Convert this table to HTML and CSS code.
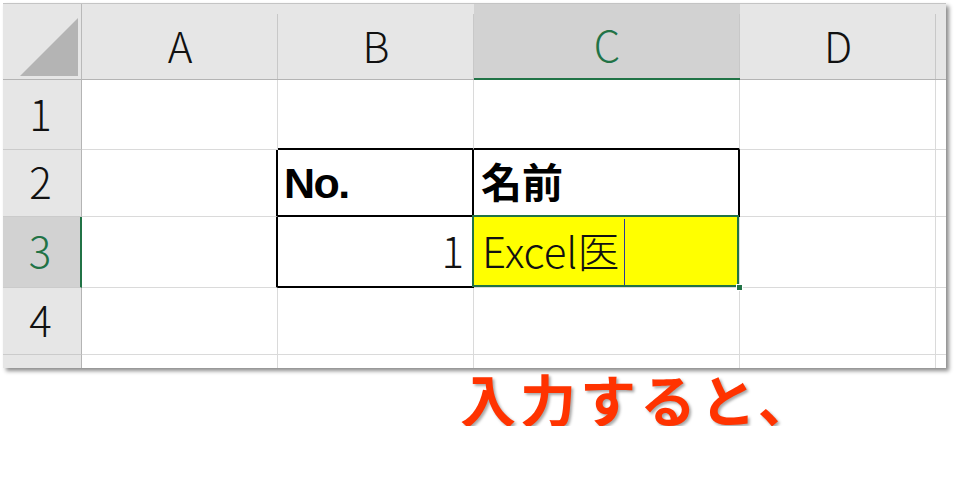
FILE: index.html
```html
<!DOCTYPE html>
<html lang="ja">
<head>
<meta charset="utf-8">
<title>Excel</title>
<link rel="stylesheet" href="styles.css">
</head>
<body>
<div class="sheet">
  <div class="c corner"><svg class="tri" width="78" height="75" viewBox="0 0 78 75"><polygon points="17,72 75,72 75,14" fill="#b4b4b4"/></svg></div>
  <div class="c h">A</div>
  <div class="c h">B</div>
  <div class="c h sel-h">C</div>
  <div class="c h">D</div>
  <div class="c h h-end"></div>

  <div class="c r">1</div>
  <div class="c"></div>
  <div class="c tb-top"></div>
  <div class="c tb-top"></div>
  <div class="c"></div>
  <div class="c end"></div>

  <div class="c r">2</div>
  <div class="c tb-left"></div>
  <div class="c tb-cell txt-bold">No.</div>
  <div class="c tb-cell txt-jp">名前</div>
  <div class="c"></div>
  <div class="c end"></div>

  <div class="c r sel-r">3</div>
  <div class="c tb-left"></div>
  <div class="c tb-cell txt num">1</div>
  <div class="c active txt">Excel医<span class="caret"></span></div>
  <div class="c"></div>
  <div class="c end"></div>

  <div class="c r">4</div>
  <div class="c"></div>
  <div class="c"></div>
  <div class="c"></div>
  <div class="c"></div>
  <div class="c end"></div>

  <div class="c r last"></div>
  <div class="c last"></div>
  <div class="c last"></div>
  <div class="c last"></div>
  <div class="c last"></div>
  <div class="c end last"></div>
</div>
<p class="note">入力すると、</p>
</body>
</html>
```
FILE: styles.css
```css
body {
  margin: 0;
  background: #fff;
  font-family: "Noto Sans CJK JP", sans-serif;
}

.sheet {
  margin: 3px 0 0 3px;
  width: 943px;
  border-top: 1px solid #c4c4c4;
  display: grid;
  grid-template-columns: 79px 196px 196px 266px 196px 10px;
  grid-template-rows: 76px 70px 67px 71px 67px 13px;
  box-shadow: 3px 3px 4px rgba(0, 0, 0, 0.45);
  background: #fff;
}

.c {
  box-sizing: border-box;
  border-right: 1px solid #dadada;
  border-bottom: 1px solid #dadada;
  display: flex;
  align-items: center;
  min-width: 0;
}

.end { border-right: none; }
.last { border-bottom: none; }

.corner {
  background: #e6e6e6;
  border-right: 1px solid #b9b9b9;
  border-bottom: 1px solid #b4b4b4;
  align-items: flex-start;
}
.tri { display: block; }

.h {
  background: #e6e6e6 linear-gradient(#c8c8c8, #c8c8c8) right bottom / 1px calc(100% - 10px) no-repeat;
  border-right: none;
  border-bottom: 1px solid #b4b4b4;
  justify-content: center;
  font-size: 42px;
  font-weight: 300;
  color: #111;
  line-height: 1;
  padding-top: 6px;
}
.h-end { background: #e6e6e6; }

.sel-h {
  background: #d2d2d2 linear-gradient(#c8c8c8, #c8c8c8) right bottom / 1px calc(100% - 10px) no-repeat;
  color: #217346;
  border-bottom: 2px solid #217346;
}

.r {
  background: #e6e6e6;
  border-right: 1px solid #b4b4b4;
  border-bottom: 1px solid #cbcbcb;
  justify-content: center;
  font-size: 42px;
  font-weight: 300;
  color: #111;
  line-height: 1;
  padding-right: 3px;
  padding-bottom: 4px;
}
.r.last { border-bottom: none; }

.sel-r {
  background: #d2d2d2;
  color: #217346;
  border-right: 2px solid #217346;
}

.tb-top { border-bottom: 2px solid #000; }
.tb-left { border-right: 2px solid #000; }
.tb-cell {
  border-right: 2px solid #000;
  border-bottom: 2px solid #000;
}

.txt-bold {
  font-family: "Liberation Sans", Arial, sans-serif;
  font-weight: bold;
  font-size: 43px;
  letter-spacing: -1.5px;
  line-height: 1;
  padding-left: 6px;
  padding-top: 2px;
}

.txt-jp {
  font-weight: bold;
  font-size: 41px;
  line-height: 1;
  padding-left: 7px;
  padding-bottom: 4px;
}

.txt {
  font-size: 42px;
  font-weight: 300;
  line-height: 1;
  padding-bottom: 4px;
  color: #111;
}

.num {
  justify-content: flex-end;
  padding-right: 8px;
}

.active {
  position: relative;
  background: #ffff00;
  padding-left: 8px;
}
.active::after {
  content: "";
  position: absolute;
  left: -2px;
  top: -2px;
  right: 0;
  bottom: 0;
  border: 2px solid #217346;
}
.active::before {
  content: "";
  position: absolute;
  right: -4px;
  bottom: -4px;
  width: 5px;
  height: 5px;
  background: #217346;
  border: 1px solid #fff;
  z-index: 2;
}

.caret {
  display: inline-block;
  width: 0;
  height: 66px;
  border-left: 1px solid #2a3a9a;
  margin-left: 5px;
  margin-top: 4px;
}

.note {
  margin: 2px 0 0 460px;
  font-size: 56px;
  font-weight: bold;
  letter-spacing: 4px;
  line-height: 1;
  color: #ff3300;
  text-shadow: 2px 2px 3px rgba(0, 0, 0, 0.35);
}
```
